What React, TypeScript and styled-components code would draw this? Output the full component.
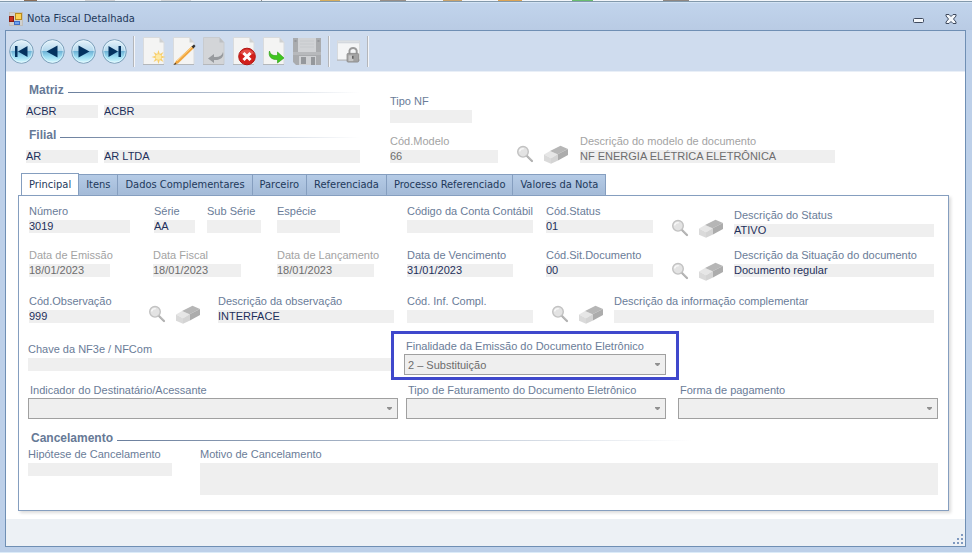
import React, { useId } from "react";
import styled, { createGlobalStyle } from "styled-components";

const ui = '"DejaVu Sans Condensed", "Open Sans", sans-serif';
const form = '"Liberation Sans", Arial, sans-serif';

const Global = createGlobalStyle`
  * { box-sizing: border-box; }
  html, body, #root { height: 100%; }
  body { margin: 0; background: #bdd0e9; font-family: ${form}; }
  button, input, select, textarea { font: inherit; margin: 0; border-radius: 0; }
`;

const Page = styled.div`
  min-height: 100%;
  display: flex;
  flex-direction: column;
  background: #bdd0e9;
  border-bottom: 1px solid #dcebf8;
`;
const Strip = styled.div`
  height: 3px;
  border-bottom: 1px solid #d3e3f4;
  background:
    linear-gradient(#8299ac, #8299ac) 0 1px / 100% 1px no-repeat,
    linear-gradient(90deg, #f3f6fa 24px, #8c6f58 24px 37px, #f3f6fa 37px 85px, #d3d3d5 85px 115px,
      #f3f6fa 115px 161px, #d5d7da 161px 191px, #f3f6fa 191px 261px, #8f8f8f 261px 262px, #f3f6fa 262px 320px,
      #d6ad5d 320px 340px, #f3f6fa 340px 380px, #998f87 380px 406px, #f3f6fa 406px 443px, #c9a36c 443px 462px,
      #f3f6fa 462px 498px, #dca455 498px 522px, #f3f6fa 522px 572px, #69bd70 572px 593px, #f3f6fa 593px 663px,
      #8f8781 663px 689px, #f3f6fa 689px);
`;
const TitleBar = styled.header`
  height: 27px;
  display: flex;
  align-items: center;
  gap: 4px;
  padding: 4px 13px 0 9px;
  background: linear-gradient(#c1d4ec, #b9cbe4);
`;
const Title = styled.h1`
  flex: 1;
  margin: 0;
  font: 400 11px/16px ${ui};
  color: #1e395b;
`;
const CaptionButton = styled.button`
  border: 0;
  padding: 0;
  width: 16px;
  height: 16px;
  margin-left: 12px;
  background: none;
  display: flex;
  align-items: center;
  justify-content: center;
`;
const Shell = styled.div`
  flex: 1;
  display: flex;
  flex-direction: column;
  margin: 0 6px 5px 5px;
  border: 1px solid #6f8fb4;
  background: #fff;
`;
const Toolbar = styled.div`
  height: 41px;
  display: flex;
  align-items: center;
  gap: 6px;
  padding: 0 3px;
  background: #cfdcee;
  border-bottom: 1px solid #e9eff7;
`;
const ToolButton = styled.button<{ $w?: number }>`
  border: 0;
  padding: 0;
  background: none;
  width: ${(p) => p.$w ?? 24}px;
  height: 30px;
  display: flex;
  align-items: center;
  justify-content: center;
`;
const Divider = styled.span`
  width: 2px;
  height: 31px;
  margin-right: 1px;
  border-left: 1px solid #b4b6ba;
  border-right: 1px solid #f3f5f9;
`;
const Body = styled.main`
  flex: 1;
  padding: 11px 16px 8px 12px;
  display: flex;
  flex-direction: column;
`;
const Head = styled.div`
  display: grid;
  grid-template-columns: 334fr 445fr 84fr;
  column-gap: 30px;
  padding-left: 8px;
`;
const HeadSide = styled.div<{ $top: number }>`
  padding-top: ${(p) => p.$top}px;
  min-width: 0;
`;
const LegendBox = styled.h2<{ $gap: number }>`
  display: flex;
  align-items: center;
  gap: 4px;
  margin: 0 0 ${(p) => p.$gap}px;
  padding-left: 3px;
  font: 700 12px/14px ${form};
  color: #667996;
  &::after {
    content: "";
    flex: 1;
    height: 1px;
    margin-top: 4px;
    background: linear-gradient(90deg, #6b7f9d, #b9c4d3 55%, #fff);
  }
`;
const Row = styled.div<{ $gap?: number; $inset?: boolean }>`
  display: flex;
  align-items: flex-start;
  margin-bottom: ${(p) => p.$gap ?? 0}px;
  padding: ${(p) => (p.$inset ? "0 4px 0 1px" : "0")};
`;
const Cell = styled.div<{ $w: number; $gap?: number; $drop?: number }>`
  flex: ${(p) => p.$w} 1 0;
  min-width: 0;
  margin-left: ${(p) => p.$gap ?? 0}px;
  padding-top: ${(p) => p.$drop ?? 0}px;
`;
const Label = styled.label<{ $muted?: boolean; $pad?: boolean }>`
  display: block;
  height: 16px;
  font-size: 11px;
  line-height: 14px;
  white-space: nowrap;
  padding-left: ${(p) => (p.$pad ? 2 : 0)}px;
  color: ${(p) => (p.$muted ? "#a3a3a3" : "#6a7c98")};
`;
const Input = styled.input<{ $muted?: boolean }>`
  display: block;
  width: 100%;
  height: 13px;
  border: 0;
  padding: 0;
  outline: 0;
  background: #efefef;
  font-size: 11px;
  line-height: 13px;
  color: ${(p) => (p.$muted ? "#6d6d6d" : "#1e2f5b")};
`;
const Area = styled.textarea`
  display: block;
  width: 100%;
  height: 32px;
  border: 0;
  padding: 0;
  outline: 0;
  resize: none;
  background: #efefef;
`;
const Pick = styled.div`
  display: grid;
  align-items: center;
  margin-top: -1px;
  > * { grid-area: 1 / 1; }
  > svg { justify-self: end; margin-right: 6px; pointer-events: none; }
`;
const Select = styled.select`
  appearance: none;
  width: 100%;
  height: 21px;
  padding: 0 18px 0 3px;
  border: 1px solid #a0a0a0;
  background: #efefef;
  font-size: 11px;
  color: #6d6d6d;
  opacity: 1;
`;
const Tools = styled.div<{ $gap?: number; $drop?: number }>`
  display: flex;
  gap: 9px;
  width: 53px;
  height: 29px;
  margin-left: ${(p) => p.$gap ?? 18}px;
  padding-top: ${(p) => p.$drop ?? 15}px;
`;
const IconButton = styled.button`
  border: 0;
  padding: 0;
  background: none;
  display: flex;
`;
const Tabs = styled.div`
  display: flex;
  align-items: flex-end;
  margin-top: 10px;
  padding-left: 3px;
`;
const Tab = styled.button<{ $active?: boolean }>`
  height: ${(p) => (p.$active ? 23 : 21)}px;
  margin: 0 0 ${(p) => (p.$active ? -1 : 0)}px ${(p) => (p.$active ? 0 : -1)}px;
  padding: 0 7px;
  border: 1px solid #859ebf;
  border-bottom: 0;
  background: ${(p) => (p.$active ? "#fff" : "linear-gradient(#b5cbe6, #a3bad7)")};
  font: 400 11px/16px ${ui};
  color: #1e395b;
  white-space: nowrap;
`;
const Panel = styled.section`
  border: 1px solid #859ebf;
  box-shadow: 2px 2px 3px #dcdcdc;
  padding: 8px 10px 15px 9px;
`;
const Highlight = styled.div`
  border: 3px solid #3f48cc;
  height: 49px;
  padding: 5px 10px 0;
`;
const CancelHead = styled.div`
  width: 73%;
  margin-top: 12px;
`;
const Status = styled.footer`
  height: 27px;
  display: flex;
  align-items: flex-end;
  justify-content: flex-end;
  padding: 1px;
  background: #edf1f5;
`;

type FieldProps = { label?: string; name?: string; value?: string; w: number; gap?: number; drop?: number; muted?: boolean };

function Field({ label, name, value = "", w, gap, drop, muted }: FieldProps) {
  const id = useId();
  return (
    <Cell $w={w} $gap={gap} $drop={drop}>
      {label && <Label htmlFor={id} $muted={muted}>{label}</Label>}
      <Input id={id} aria-label={name} value={value} readOnly $muted={muted} />
    </Cell>
  );
}

function Combo({ label, value = "" }: { label: string; value?: string }) {
  const id = useId();
  return (
    <>
      <Label htmlFor={id} $pad>{label}</Label>
      <Pick>
        <Select id={id} disabled defaultValue={value}><option>{value}</option></Select>
        <svg width="5" height="3" viewBox="0 0 5 3"><path d="M0 0h5v1L3 3H2L0 1z" fill="#909090" /></svg>
      </Pick>
    </>
  );
}

function Legend({ children, gap }: { children: string; gap: number }) {
  return <LegendBox $gap={gap}>{children}</LegendBox>;
}

function Lookup({ gap, drop }: { gap?: number; drop?: number }) {
  return (
    <Tools $gap={gap} $drop={drop}>
      <IconButton aria-label="Pesquisar">
        <svg width="18" height="18" viewBox="0 0 18 18">
          <path d="M11 11l5 5" stroke="#adadad" strokeWidth="2.2" strokeLinecap="round" />
          <path d="M12 11.4l4 4" stroke="#ccc" strokeWidth="0.8" />
          <circle cx="7" cy="6.8" r="5.3" fill="#e3e3e3" stroke="#c2c2c2" strokeWidth="1.4" />
          <path d="M3.5 6.5c.4-2 2-3 4.3-2.9" stroke="#f8f8f8" strokeWidth="1.4" fill="none" />
        </svg>
      </IconButton>
      <IconButton aria-label="Limpar">
        <svg width="26" height="19" viewBox="0 0 26 19">
          <path d="M1 9.500L7 6l7.500 3.300-6.500 4z" fill="#e6e6e6" />
          <path d="M7 6L17.500 .8 25 4l-10.500 5.300z" fill="#b6b6b6" />
          <path d="M14.500 9.300L25 4v6l-10.500 5.700z" fill="#acacac" />
          <path d="M8 13.200l6.500-3.900v6.400L8 18.700z" fill="#d4d4d4" />
          <path d="M1 9.500l7 3.700v5.500l-7-3z" fill="#dadada" />
        </svg>
      </IconButton>
    </Tools>
  );
}

function Orb({ d, name }: { d: string; name: string }) {
  const id = useId();
  return (
    <ToolButton $w={25} aria-label={name}>
      <svg width="25" height="25" viewBox="0 0 25 25">
        <defs>
          <linearGradient id={id} x1="0" y1="0" x2="0" y2="1">
            <stop offset="0" stopColor="#e9f4fb" />
            <stop offset="0.46" stopColor="#b4d9ee" />
            <stop offset="0.5" stopColor="#6fb3d6" />
            <stop offset="0.72" stopColor="#9bdcf2" />
            <stop offset="1" stopColor="#dcfbff" />
          </linearGradient>
        </defs>
        <circle cx="12.500" cy="12.500" r="11.800" fill={`url(#${id})`} stroke="#7d9fb9" strokeWidth="1" />
        <circle cx="12.500" cy="12.500" r="10.700" fill="none" stroke="#e9f9ff" strokeOpacity="0.6" />
        <path d={d} fill="#04325f" />
      </svg>
    </ToolButton>
  );
}

function Sheet({ children, dim }: { children: React.ReactNode; dim?: boolean }) {
  return (
    <svg width="24" height="30" viewBox="0 0 24 30">
      <path d="M1.500 1.500h16l4.500 5v22H1.500z" fill={dim ? "#d3d5d8" : "#f4f4f3"} stroke={dim ? "#c8cbcf" : "#d9dbdd"} />
      <path d="M17.500 1.500v5H22z" fill={dim ? "#bcbfc3" : "#cfd1d2"} />
      <path d="M1 28.500h21" stroke={dim ? "#b4b7bb" : "#b3b7bb"} />
      {children}
    </svg>
  );
}

const tabs = ["Principal", "Itens", "Dados Complementares", "Parceiro", "Referenciada", "Processo Referenciado", "Valores da Nota"];

export default function App() {
  return (
    <>
      <Global />
      <Page>
        <Strip />
        <TitleBar>
          <svg width="14" height="14" viewBox="0 0 14 14">
            <rect x="0.500" y="0.500" width="13" height="13" fill="#d0d0ce" stroke="#c0beba" />
            <rect x="0.500" y="4.500" width="4" height="5" fill="#c82a1c" stroke="#8a1a12" />
            <rect x="6.500" y="1.500" width="6" height="6" fill="#fbd255" stroke="#b98a1c" />
            <rect x="5.500" y="9.500" width="5" height="3" fill="#6ca2f2" stroke="#3d6cc4" />
          </svg>
          <Title>Nota Fiscal Detalhada</Title>
          <CaptionButton aria-label="Minimizar">
            <svg width="12" height="12" viewBox="0 0 12 12"><rect x="0.500" y="5.500" width="10" height="4" rx="1" fill="#f4f7fb" stroke="#3f4a5e" /></svg>
          </CaptionButton>
          <CaptionButton aria-label="Fechar">
            <svg width="12" height="10" viewBox="0 0 12 10"><path d="M1 .5h3l2 2 2-2h3v1.500L8.500 5 11 8v1.500H8l-2-2-2 2H1V8l2.500-3L1 2z" fill="#f4f7fb" stroke="#3f4a5e" /></svg>
          </CaptionButton>
        </TitleBar>
        <Shell>
          <Toolbar>
            <Orb name="Primeiro" d="M6 7h2.500v11H6zM18.500 7v11L9 12.500z" />
            <Orb name="Anterior" d="M17.500 6.500v12L6.500 12.500z" />
            <Orb name="Próximo" d="M7.500 6.500v12l11-6z" />
            <Orb name="Último" d="M6.500 7v11l9.500-5.500zM16.500 7H19v11h-2.500z" />
            <Divider />
            <ToolButton aria-label="Novo">
              <Sheet>
                <path d="M16.500 14l1.300 4 3.700-2-2 3.700 4 1.300-4 1.300 2 3.700-3.700-2-1.300 4-1.300-4-3.700 2 2-3.700-4-1.300 4-1.300-2-3.700 3.700 2z" fill="#f7cf6d" />
                <circle cx="16.500" cy="21" r="2.800" fill="#fde9a6" />
              </Sheet>
            </ToolButton>
            <ToolButton aria-label="Editar">
              <Sheet>
                <path d="M4 25L20 10l2 2L6 27.500 2 28.500z" fill="#f0a53e" />
                <path d="M5 25L20.500 10.500" stroke="#ffd58a" />
                <path d="M19.500 10.500l2.500-2 1.500 1.500-2 2.500z" fill="#333" />
                <path d="M2 29l1-2.500 1.500 1.500z" fill="#4a3a28" />
              </Sheet>
            </ToolButton>
            <ToolButton aria-label="Desfazer">
              <Sheet dim>
                <path d="M6 22.500l6-4.500v3c5 .5 8-1 9-5 1.500 5.500-3 8.500-9 8v3z" fill="#979a9e" />
              </Sheet>
            </ToolButton>
            <ToolButton aria-label="Excluir">
              <Sheet>
                <circle cx="15" cy="20.500" r="8.300" fill="#d21f1b" stroke="#b01512" />
                <path d="M8 17a8 7 0 0 1 14 0c-4 3-10 3-14 0z" fill="#ee7069" opacity="0.6" />
                <path d="M11.500 17l7 7M18.500 17l-7 7" stroke="#fff" strokeWidth="3" />
              </Sheet>
            </ToolButton>
            <ToolButton aria-label="Avançar">
              <Sheet>
                <path d="M7.500 15c1 4 4 5 8 4.500V16l6.500 6-6.500 5v-3.500c-6 .5-9.500-3-8-8.500z" fill="#3fc61f" stroke="#2a9a12" strokeWidth="0.600" />
              </Sheet>
            </ToolButton>
            <ToolButton $w={30} aria-label="Salvar">
              <svg width="30" height="29" viewBox="0 0 30 29">
                <path d="M1 1h28v27H4l-3-3z" fill="#a9abae" />
                <path d="M6 1h18v14H6z" fill="#d1d3d6" />
                <path d="M8 4h14M8 7h14M8 10h14" stroke="#c6c9cc" />
                <path d="M1 15h28v3H1z" fill="#b7b9bc" />
                <path d="M7 19h17v9H7z" fill="#cfd1d4" />
                <path d="M9 20h5v7H9zM19 20h4v8h-4z" fill="#95989c" />
                <path d="M2.500 4h2M25.500 4h2" stroke="#8e9195" strokeWidth="1.500" />
              </svg>
            </ToolButton>
            <Divider />
            <ToolButton aria-label="Bloquear">
              <svg width="25" height="26" viewBox="0 0 25 26">
                <rect x="0.500" y="2.500" width="23" height="20" fill="#f4f5f6" stroke="#d7d9dc" />
                <path d="M1 4h22" stroke="#d4d8de" strokeWidth="2" />
                <path d="M0 22.500h24" stroke="#aeb1b5" />
                <path d="M13 16v-3.500a4 4 0 0 1 7.500 0V16" fill="none" stroke="#9a9a9a" strokeWidth="2" />
                <rect x="10.500" y="15.500" width="12" height="9" rx="1" fill="#a2a2a2" stroke="#8f8f8f" />
                <path d="M12 17.500h5v6h-5z" fill="#c6c6c6" />
                <path d="M16.500 18v3" stroke="#555" strokeWidth="1.500" />
              </svg>
            </ToolButton>
            <Divider />
          </Toolbar>
          <Body>
            <Head>
              <HeadSide $top={0}>
                <Legend gap={8}>Matriz</Legend>
                <Row $gap={10}>
                  <Field name="Código da matriz" value="ACBR" w={72} />
                  <Field name="Nome da matriz" value="ACBR" w={256} gap={6} />
                </Row>
                <Legend gap={8}>Filial</Legend>
                <Row>
                  <Field name="Código da filial" value="AR" w={72} />
                  <Field name="Nome da filial" value="AR LTDA" w={256} gap={6} />
                </Row>
              </HeadSide>
              <HeadSide $top={11}>
                <Row $gap={11}>
                  <Field label="Tipo NF" w={82} />
                  <Cell $w={363} />
                </Row>
                <Row>
                  <Field label="Cód.Modelo" value="66" w={108} muted />
                  <Lookup gap={18} drop={11} />
                  <Field label="Descrição do modelo de documento" value="NF ENERGIA ELÉTRICA ELETRÔNICA" w={255} gap={11} muted />
                </Row>
              </HeadSide>
            </Head>
            <Tabs role="tablist">
              {tabs.map((t, i) => (
                <Tab key={t} role="tab" aria-selected={i === 0} $active={i === 0}>{t}</Tab>
              ))}
            </Tabs>
            <Panel role="tabpanel">
              <Row $inset $gap={11}>
                <Field label="Número" value="3019" w={101} />
                <Field label="Série" value="AA" w={41} gap={24} />
                <Field label="Sub Série" w={54} gap={12} />
                <Field label="Espécie" w={63} gap={16} />
                <Field label="Código da Conta Contábil" w={126} gap={67} />
                <Field label="Cód.Status" value="01" w={107} gap={13} />
                <Lookup />
                <Field label="Descrição do Status" value="ATIVO" w={200} gap={10} drop={4} />
              </Row>
              <Row $inset $gap={17}>
                <Field label="Data de Emissão" value="18/01/2023" w={81} muted />
                <Field label="Data Fiscal" value="18/01/2023" w={88} gap={43} muted />
                <Field label="Data de Lançamento" value="18/01/2023" w={97} gap={36} muted />
                <Field label="Data de Vencimento" value="31/01/2023" w={106} gap={33} />
                <Field label="Cód.Sit.Documento" value="00" w={107} gap={33} />
                <Lookup drop={14} />
                <Field label="Descrição da Situação do documento" value="Documento regular" w={200} gap={10} />
              </Row>
              <Row $inset $gap={8}>
                <Field label="Cód.Observação" value="999" w={101} />
                <Lookup drop={11} />
                <Field label="Descrição da observação" value="INTERFACE" w={176} gap={17} />
                <Field label="Cód. Inf. Compl." w={126} gap={13} />
                <Lookup drop={11} />
                <Field label="Descrição da informação complementar" w={320} gap={10} />
              </Row>
              <Row $gap={3}>
                <Field label="Chave da NF3e / NFCom" w={363} drop={11} />
                <Cell $w={288}>
                  <Highlight>
                    <Combo label="Finalidade da Emissão do Documento Eletrônico" value="2 – Substituição" />
                  </Highlight>
                </Cell>
                <Cell $w={259} />
              </Row>
              <Row>
                <Cell $w={370}><Combo label="Indicador do Destinatário/Acessante" /></Cell>
                <Cell $w={260} $gap={8}><Combo label="Tipo de Faturamento do Documento Eletrônico" /></Cell>
                <Cell $w={260} $gap={12}><Combo label="Forma de pagamento" /></Cell>
              </Row>
              <CancelHead><Legend gap={2}>Cancelamento</Legend></CancelHead>
              <Row>
                <Field label="Hipótese de Cancelamento" w={144} />
                <Cell $w={738} $gap={28}>
                  <Label htmlFor="motivo">Motivo de Cancelamento</Label>
                  <Area id="motivo" readOnly />
                </Cell>
              </Row>
            </Panel>
          </Body>
          <Status>
            <svg width="11" height="11" viewBox="0 0 11 11">
              <path d="M8 0h2v2H8zM4 4h2v2H4zM8 4h2v2H8zM0 8h2v2H0zM4 8h2v2H4zM8 8h2v2H8z" fill="#7f99bf" />
            </svg>
          </Status>
        </Shell>
      </Page>
    </>
  );
}
